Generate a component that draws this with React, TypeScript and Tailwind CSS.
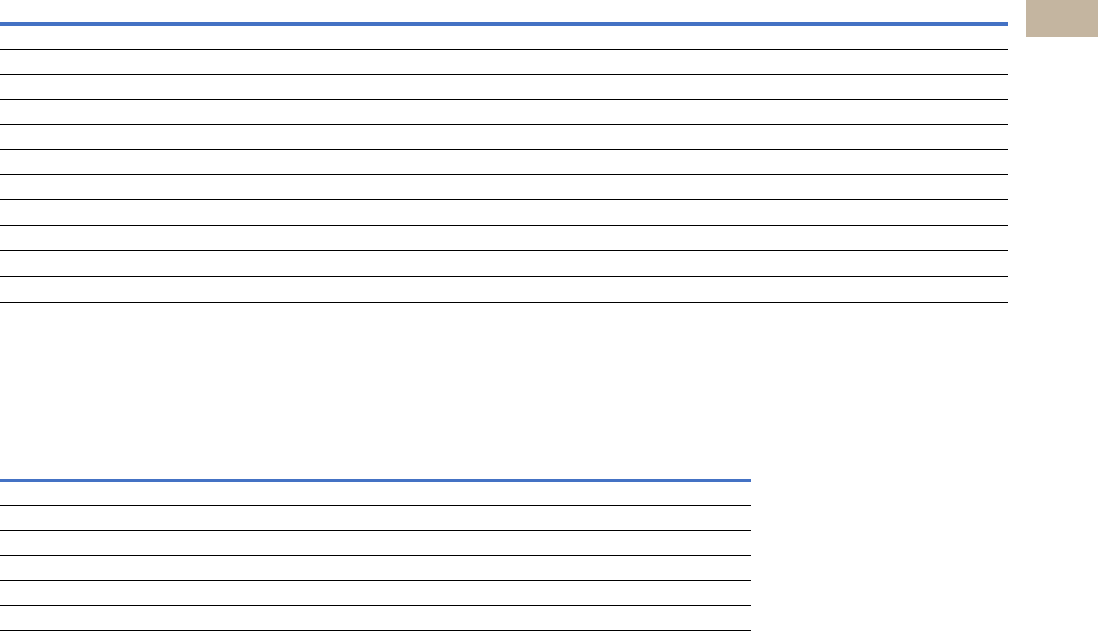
const topRows = [
  'h-[25px]',
  'h-[25px]',
  'h-[25px]',
  'h-[25px]',
  'h-[25px]',
  'h-[25px]',
  'h-[26px]',
  'h-[25px]',
  'h-[26px]',
  'h-[26px]',
];

const bottomRows = ['h-[25px]', 'h-[25px]', 'h-[25px]', 'h-[25px]', 'h-[25px]'];

function EmptyTable({ width, rows, headerClass }: { width: string; rows: string[]; headerClass: string }) {
  return (
    <div className={`${width} flex flex-col`}>
      <div className={headerClass} />
      {rows.map((h, i) => (
        <div key={i} className={`${h} border-b border-black`} />
      ))}
    </div>
  );
}

export default function App() {
  return (
    <div className="w-[1098px] h-[631px] bg-white overflow-hidden flex flex-col" style={{ fontFamily: '"Liberation Sans", Arial, sans-serif' }}>
      <div className="flex items-start">
        <div className="pt-[22px]">
          <EmptyTable
            width="w-[1008px]"
            rows={topRows}
            headerClass="h-[28px] border-t-4 border-t-[#4472c4] border-b border-b-black"
          />
        </div>
        <div className="ml-[18px] w-[72px] h-[37px] bg-[#c4b5a0]" />
      </div>
      <div className="mt-[176px]">
        <EmptyTable
          width="w-[751px]"
          rows={bottomRows}
          headerClass="h-[27px] border-t-[3px] border-t-[#4472c4] border-b border-b-black"
        />
      </div>
    </div>
  );
}
